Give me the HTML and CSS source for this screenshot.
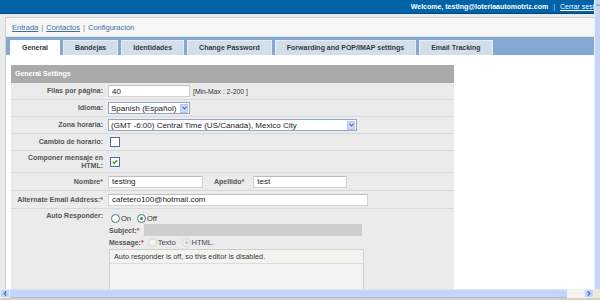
FILE: index.html
```html
<!DOCTYPE html>
<html lang="es">
<head>
    <meta charset="UTF-8">
    <meta name="viewport" content="width=device-width, initial-scale=1.0">
    <title>Configuración</title>
    <link rel="stylesheet" href="styles.css">
</head>
<body>
<div class="window">
    <div class="viewport">
        <div class="page">
            <div class="topbar">
                <span>Welcome, testing@loteriaautomotriz.com</span>
                <span class="bar">|</span>
                <a href="#">Cerrar sesión</a>
            </div>

            <div class="box">
                <div class="crumbs">
                    <a href="#">Entrada</a> <span class="pipe">|</span>
                    <a href="#">Contactos</a> <span class="pipe">|</span>
                    <span class="here">Configuración</span>
                </div>

                <ul class="tabs">
                    <li class="active">General</li>
                    <li>Bandejas</li>
                    <li>Identidades</li>
                    <li>Change Password</li>
                    <li>Forwarding and POP/IMAP settings</li>
                    <li>Email Tracking</li>
                </ul>

                <div class="content">
                    <div class="panel">
                        <div class="panel-head">General Settings</div>

                        <div class="row">
                            <label>Filas por página:</label>
                            <div class="field">
                                <input class="txt w-rows" type="text" value="40">
                                <span class="hint">[Min-Max : 2-200 ]</span>
                            </div>
                        </div>

                        <div class="row">
                            <label>Idioma:</label>
                            <div class="field">
                                <div class="select w-lang">
                                    <span class="sel-text">Spanish (Español)</span>
                                    <span class="arrow"><svg width="5" height="4" viewBox="0 0 5 4"><path d="M0.5 0.8 L2.5 2.8 L4.5 0.8" fill="none" stroke="#4d6185" stroke-width="1.1"/></svg></span>
                                </div>
                            </div>
                        </div>

                        <div class="row">
                            <label>Zona horaria:</label>
                            <div class="field">
                                <div class="select w-zone">
                                    <span class="sel-text">(GMT -6:00) Central Time (US/Canada), Mexico City</span>
                                    <span class="arrow"><svg width="5" height="4" viewBox="0 0 5 4"><path d="M0.5 0.8 L2.5 2.8 L4.5 0.8" fill="none" stroke="#4d6185" stroke-width="1.1"/></svg></span>
                                </div>
                            </div>
                        </div>

                        <div class="row">
                            <label>Cambio de horario:</label>
                            <div class="field">
                                <span class="chk"></span>
                            </div>
                        </div>

                        <div class="row tall">
                            <label>Componer mensaje en HTML:</label>
                            <div class="field">
                                <span class="chk"><svg width="6" height="6" viewBox="0 0 6 6"><path d="M0.8 2.8 L2.3 4.3 L5.2 1.2" fill="none" stroke="#21a121" stroke-width="1.3"/></svg></span>
                            </div>
                        </div>

                        <div class="row mid">
                            <label>Nombre<span class="req">*</span></label>
                            <div class="field">
                                <input class="txt w-name" type="text" value="testing">
                                <span class="inline-label">Apellido<span class="req">*</span></span>
                                <input class="txt w-last" type="text" value="test">
                            </div>
                        </div>

                        <div class="row mid">
                            <label>Alternate Email Address:<span class="req">*</span></label>
                            <div class="field">
                                <input class="txt w-mail" type="text" value="cafetero100@hotmail.com">
                            </div>
                        </div>

                        <div class="row auto">
                            <label>Auto Responder:</label>
                            <div class="stack">
                                <div class="line">
                                    <span class="radio"></span><span class="opt">On</span>
                                    <span class="radio on"></span><span class="opt">Off</span>
                                </div>
                                <div class="line">
                                    <span class="sub-label">Subject:<span class="req">*</span></span>
                                    <span class="disabled-input"></span>
                                </div>
                                <div class="line">
                                    <span class="sub-label msg">Message:<span class="req">*</span></span>
                                    <span class="radio off"></span><span class="opt dim">Texto</span>
                                    <span class="radio off on-dim"></span><span class="opt dim">HTML.</span>
                                </div>
                                <div class="editor">
                                    <div class="editor-bar">Auto responder is off, so this editor is disabled.</div>
                                    <div class="editor-body"></div>
                                </div>
                            </div>
                        </div>
                    </div>
                </div>
            </div>
        </div>
    </div>

    <div class="vscroll">
        <span class="vbtn"><svg width="5" height="4" viewBox="0 0 5 4"><path d="M0.5 3.2 L2.5 1.2 L4.5 3.2" fill="none" stroke="#4d6185" stroke-width="1"/></svg></span>
    </div>

    <div class="hscroll">
        <span class="hbtn"><svg width="4" height="5" viewBox="0 0 4 5"><path d="M3.2 0.5 L1.2 2.5 L3.2 4.5" fill="none" stroke="#4d6185" stroke-width="1.1"/></svg></span>
        <span class="thumb"></span>
        <span class="track"></span>
        <span class="hbtn"><svg width="4" height="5" viewBox="0 0 4 5"><path d="M0.8 0.5 L2.8 2.5 L0.8 4.5" fill="none" stroke="#4d6185" stroke-width="1.1"/></svg></span>
    </div>
    <div class="corner"></div>
    <div class="status"></div>
</div>
</body>
</html>
```

FILE: styles.css
```css
body {
    margin: 0;
    font-family: "Liberation Sans", Arial, sans-serif;
    background-color: #ffffff;
}

.window {
    width: 600px;
    height: 300px;
    display: grid;
    grid-template-columns: 594px 6px;
    grid-template-rows: 289px 9px 2px;
    overflow: hidden;
}

.viewport {
    overflow: hidden;
    background-color: #ebebeb;
}

.page {
    width: 612px;
}

/* Barra superior */
.topbar {
    height: 13px;
    background-color: #0063a8;
    border-bottom: 1px solid #00477f;
    display: flex;
    justify-content: flex-end;
    align-items: center;
    gap: 5px;
    padding-right: 10px;
    color: #ffffff;
    font-size: 7px;
    font-weight: bold;
}

.topbar a {
    color: #ffffff;
    font-weight: normal;
}

.topbar .bar {
    font-weight: normal;
    color: #c8d8ea;
}

.box {
    margin: 3px 6px 0 5px;
    background-color: #ffffff;
    border: 1px solid #cfcfcf;
    border-bottom: none;
    height: 300px;
}

.crumbs {
    height: 18px;
    padding-left: 6px;
    background-color: #f6f6f6;
    border-bottom: 1px solid #e2e2e2;
    display: flex;
    align-items: center;
    gap: 3px;
    font-size: 7.5px;
    color: #3c6ea6;
}

.crumbs a {
    color: #3c6ea6;
}

.crumbs .pipe {
    color: #6b7d94;
}

/* Pestañas */
.tabs {
    list-style: none;
    margin: 0;
    padding: 0 0 0 4px;
    height: 18px;
    display: flex;
    align-items: flex-end;
    gap: 3px;
    background-color: #84a9d1;
}

.tabs li {
    height: 14px;
    line-height: 14px;
    padding: 0 11px;
    background-color: #d3deeb;
    border: 1px solid #e6edf5;
    border-bottom: none;
    font-size: 7px;
    font-weight: bold;
    color: #3a3a3a;
    white-space: nowrap;
}

.tabs li.active {
    background-color: #ffffff;
    border-color: #ffffff;
}

.content {
    padding: 10px 0 0 5px;
}

.panel {
    width: 443px;
    background-color: #ebebeb;
}

.panel-head {
    height: 18px;
    line-height: 18px;
    padding-left: 4px;
    background-color: #aaaaaa;
    color: #ffffff;
    font-size: 7px;
    font-weight: bold;
}

.row {
    display: grid;
    grid-template-columns: 97px 1fr;
    height: 17px;
    box-sizing: border-box;
    border-bottom: 1px solid #d9d9d9;
}

.row.tall {
    height: 22px;
}

.row.mid {
    height: 18px;
}

.row.auto {
    height: auto;
    border-bottom: none;
}

.row label {
    align-self: center;
    text-align: right;
    padding-right: 5px;
    font-size: 7px;
    line-height: 8px;
    font-weight: bold;
    color: #555555;
}

.row.auto label {
    align-self: start;
    padding-top: 3px;
}

.field {
    display: flex;
    align-items: center;
}

.req {
    color: #b84a3c;
}

.txt {
    height: 12px;
    box-sizing: border-box;
    margin: 0;
    padding: 0 3px;
    border: 1px solid #d2d2d2;
    border-top-color: #bdbdbd;
    background-color: #ffffff;
    font-family: "Liberation Sans", Arial, sans-serif;
    font-size: 8px;
    color: #222222;
}

.w-rows { width: 82px; }
.w-name { width: 95px; }
.w-last { width: 94px; }
.w-mail { width: 260px; }

.hint {
    margin-left: 3px;
    font-size: 6.8px;
    color: #333333;
}

.inline-label {
    margin: 0 9px 0 11px;
    font-size: 7px;
    font-weight: bold;
    color: #555555;
}

/* Listas desplegables */
.select {
    height: 12px;
    box-sizing: border-box;
    display: flex;
    align-items: center;
    border: 1px solid #93a9c6;
    background-color: #ffffff;
}

.w-lang { width: 82px; }
.w-zone { width: 249px; }

.sel-text {
    flex: 1;
    padding-left: 2px;
    font-size: 8px;
    color: #222222;
    white-space: nowrap;
    overflow: hidden;
}

.arrow {
    width: 8px;
    height: 9px;
    margin-right: 1px;
    display: flex;
    align-items: center;
    justify-content: center;
    background-color: #c9d8fb;
    border: 1px solid #b3c6ee;
    box-sizing: border-box;
}

.chk {
    width: 8px;
    height: 8px;
    margin-left: 2px;
    border: 1px solid #4f6f93;
    background-color: #ffffff;
    display: flex;
    align-items: center;
    justify-content: center;
}

/* Respuesta automática */
.stack {
    padding-top: 3px;
    display: flex;
    flex-direction: column;
}

.line {
    display: flex;
    align-items: center;
    height: 12px;
    font-size: 7px;
    color: #4a4a4a;
}

.radio {
    width: 7px;
    height: 7px;
    margin: 0 1px 0 3px;
    border: 1px solid #4f6f93;
    border-radius: 50%;
    background-color: #ffffff;
    display: flex;
    align-items: center;
    justify-content: center;
}

.radio.on::after {
    content: "";
    width: 3px;
    height: 3px;
    border-radius: 50%;
    background-color: #21a121;
}

.radio.off {
    border-color: #d4d2c8;
    background-color: #f2f2f2;
}

.radio.on-dim::after {
    content: "";
    width: 3px;
    height: 3px;
    border-radius: 50%;
    background-color: #bcbcbc;
}

.opt {
    margin-right: 3px;
    font-size: 7.5px;
    color: #333333;
}

.opt.dim {
    color: #444444;
}

.sub-label {
    width: 35px;
    margin-left: 1px;
    font-weight: bold;
    color: #555555;
}

.sub-label.msg {
    width: auto;
    margin-right: 1px;
}

.disabled-input {
    width: 218px;
    height: 12px;
    background-color: #cecece;
}

.editor {
    margin: 1px 0 0 1px;
    width: 253px;
    border: 1px solid #d0d0d0;
    background-color: #f3f3ef;
}

.editor-bar {
    height: 13px;
    line-height: 13px;
    padding-left: 4px;
    border-bottom: 1px solid #dcdcdc;
    font-size: 7.3px;
    color: #333333;
}

.editor-body {
    height: 60px;
}

/* Barras de desplazamiento */
.vscroll {
    background-color: #c6d4f8;
    border-left: 1px solid #eef2fd;
}

.vbtn {
    height: 10px;
    display: flex;
    align-items: center;
    padding-left: 1px;
}

.hscroll {
    display: flex;
    background-color: #f4f3ee;
}

.hbtn {
    width: 10px;
    display: flex;
    align-items: center;
    justify-content: center;
    background-color: #c1d2fb;
    border: 1px solid #e6ecfd;
    box-sizing: border-box;
}

.thumb {
    width: 557px;
    background-color: #c4d4fa;
    border-top: 1px solid #dce5fd;
    border-bottom: 1px solid #a8bdf0;
    box-sizing: border-box;
}

.track {
    flex: 1;
}

.corner {
    background-color: #ece9d8;
}

.status {
    grid-column: 1 / 3;
    background-color: #d6d2c2;
}
```
